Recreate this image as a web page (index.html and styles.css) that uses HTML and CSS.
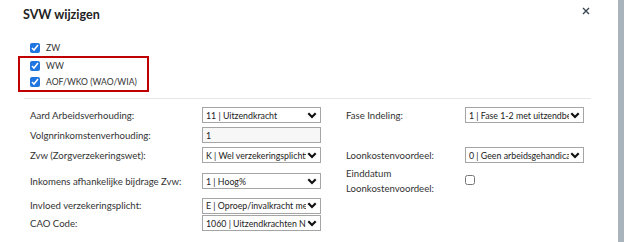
FILE: index.html
```html
<!DOCTYPE html>
<html lang="nl">
<head>
  <meta charset="UTF-8" />
  <title>SVW wijzigen</title>
  <link rel="stylesheet" href="styles.css">
</head>
<body>
  <div class="page">
    <div class="dialog">
      <div class="dialog-header">
        <h2>SVW wijzigen</h2>
        <button class="close" aria-label="Sluiten">
          <svg width="8" height="8" viewBox="0 0 8 8"><path d="M1 1 L7 7 M7 1 L1 7" stroke="#3a4652" stroke-width="1.4" fill="none"/></svg>
        </button>
      </div>

      <!-- Verzekeringen -->
      <div class="checks">
        <label class="check"><input type="checkbox" checked> ZW</label>
        <div class="highlight">
          <label class="check"><input type="checkbox" checked> WW</label>
          <label class="check"><input type="checkbox" checked> AOF/WKO (WAO/WIA)</label>
        </div>
      </div>

      <div class="divider"></div>

      <!-- Gegevens -->
      <div class="form-grid">
        <div class="label">Aard Arbeidsverhouding:</div>
        <div class="select"><span>11 | Uitzendkracht</span><svg width="10" height="7" viewBox="0 0 10 7"><path d="M1.3 1.3 L5 5 L8.7 1.3" stroke="#111" stroke-width="2.2" fill="none"/></svg></div>
        <div class="label right">Fase Indeling:</div>
        <div class="select"><span>1 | Fase 1-2 met uitzendbeding</span><svg width="10" height="7" viewBox="0 0 10 7"><path d="M1.3 1.3 L5 5 L8.7 1.3" stroke="#111" stroke-width="2.2" fill="none"/></svg></div>

        <div class="label">Volgnrinkomstenverhouding:</div>
        <div class="input">1</div>
        <div></div>
        <div></div>

        <div class="label">Zvw (Zorgverzekeringswet):</div>
        <div class="select"><span>K | Wel verzekeringsplichtig</span><svg width="10" height="7" viewBox="0 0 10 7"><path d="M1.3 1.3 L5 5 L8.7 1.3" stroke="#111" stroke-width="2.2" fill="none"/></svg></div>
        <div class="label right">Loonkostenvoordeel:</div>
        <div class="select"><span>0 | Geen arbeidsgehandicapte</span><svg width="10" height="7" viewBox="0 0 10 7"><path d="M1.3 1.3 L5 5 L8.7 1.3" stroke="#111" stroke-width="2.2" fill="none"/></svg></div>

        <div class="label">Inkomens afhankelijke bijdrage Zvw:</div>
        <div class="select"><span>1 | Hoog%</span><svg width="10" height="7" viewBox="0 0 10 7"><path d="M1.3 1.3 L5 5 L8.7 1.3" stroke="#111" stroke-width="2.2" fill="none"/></svg></div>
        <div class="label right two-line">Einddatum<br>Loonkostenvoordeel:</div>
        <div><input class="plain-check" type="checkbox"></div>

        <div class="label">Invloed verzekeringsplicht:</div>
        <div class="select"><span>E | Oproep/invalkracht met</span><svg width="10" height="7" viewBox="0 0 10 7"><path d="M1.3 1.3 L5 5 L8.7 1.3" stroke="#111" stroke-width="2.2" fill="none"/></svg></div>
        <div></div>
        <div></div>

        <div class="label">CAO Code:</div>
        <div class="select"><span>1060 | Uitzendkrachten NBBU</span><svg width="10" height="7" viewBox="0 0 10 7"><path d="M1.3 1.3 L5 5 L8.7 1.3" stroke="#111" stroke-width="2.2" fill="none"/></svg></div>
        <div></div>
        <div></div>
      </div>
    </div>
    <div class="scrollbar"></div>
  </div>
</body>
</html>
```

FILE: styles.css
```css
body {
  margin: 0;
  font-family: 'Lato', 'Noto Sans', sans-serif;
  color: #333;
  background: #fff;
}
.page {
  display: flex;
  width: 624px;
  height: 242px;
  overflow: hidden;
}
.dialog {
  flex: 1;
  padding: 0 27px 0 24px;
}
.scrollbar {
  width: 6px;
  background: #a9b3bc;
}
.dialog-header {
  display: flex;
  justify-content: space-between;
  align-items: flex-start;
  padding-top: 6px;
}
.dialog-header h2 {
  margin: 0 0 0 -1px;
  font-size: 12.5px;
  line-height: 18px;
  font-weight: 700;
  color: #222;
}
.close {
  border: 0;
  background: none;
  padding: 0;
  margin: 1px 1px 0 0;
  width: 8px;
  height: 8px;
  display: flex;
}
.checks {
  margin: 16px 0 0 6px;
}
.check {
  display: flex;
  align-items: center;
  gap: 6px;
  height: 16px;
  font-size: 8.6px;
  color: #333;
  white-space: nowrap;
}
.check input {
  width: 10px;
  height: 10px;
  margin: 0;
  accent-color: #1f76e0;
}
.highlight {
  border: 2px solid #c00000;
  margin-left: -12px;
  padding: 0 10px 0 10px;
  width: fit-content;
}
.divider {
  height: 1px;
  background: #e6e6e6;
  margin-top: 6px;
}
.form-grid {
  display: grid;
  grid-template-columns: 172px 119px 144px 119px;
  grid-template-rows: 20px 20px 20px 32px 17px 18px;
  align-items: center;
  margin: 6px 0 0 6px;
  font-size: 9.6px;
}
.label {
  color: #333;
  white-space: nowrap;
}
.label.right {
  padding-left: 25px;
}
.two-line {
  line-height: 15px;
}
.select, .input {
  box-sizing: border-box;
  height: 16px;
  border: 1px solid #a5a5a5;
  font-size: 8.8px;
  color: #222;
  padding: 0 3px;
  display: flex;
  align-items: center;
}
.select span {
  flex: 1;
  overflow: hidden;
  white-space: nowrap;
}
.select svg {
  flex: none;
  margin-left: 1px;
}
.input {
  background: #f7f7f7;
}
.plain-check {
  width: 10px;
  height: 10px;
  margin: 0;
}
```
